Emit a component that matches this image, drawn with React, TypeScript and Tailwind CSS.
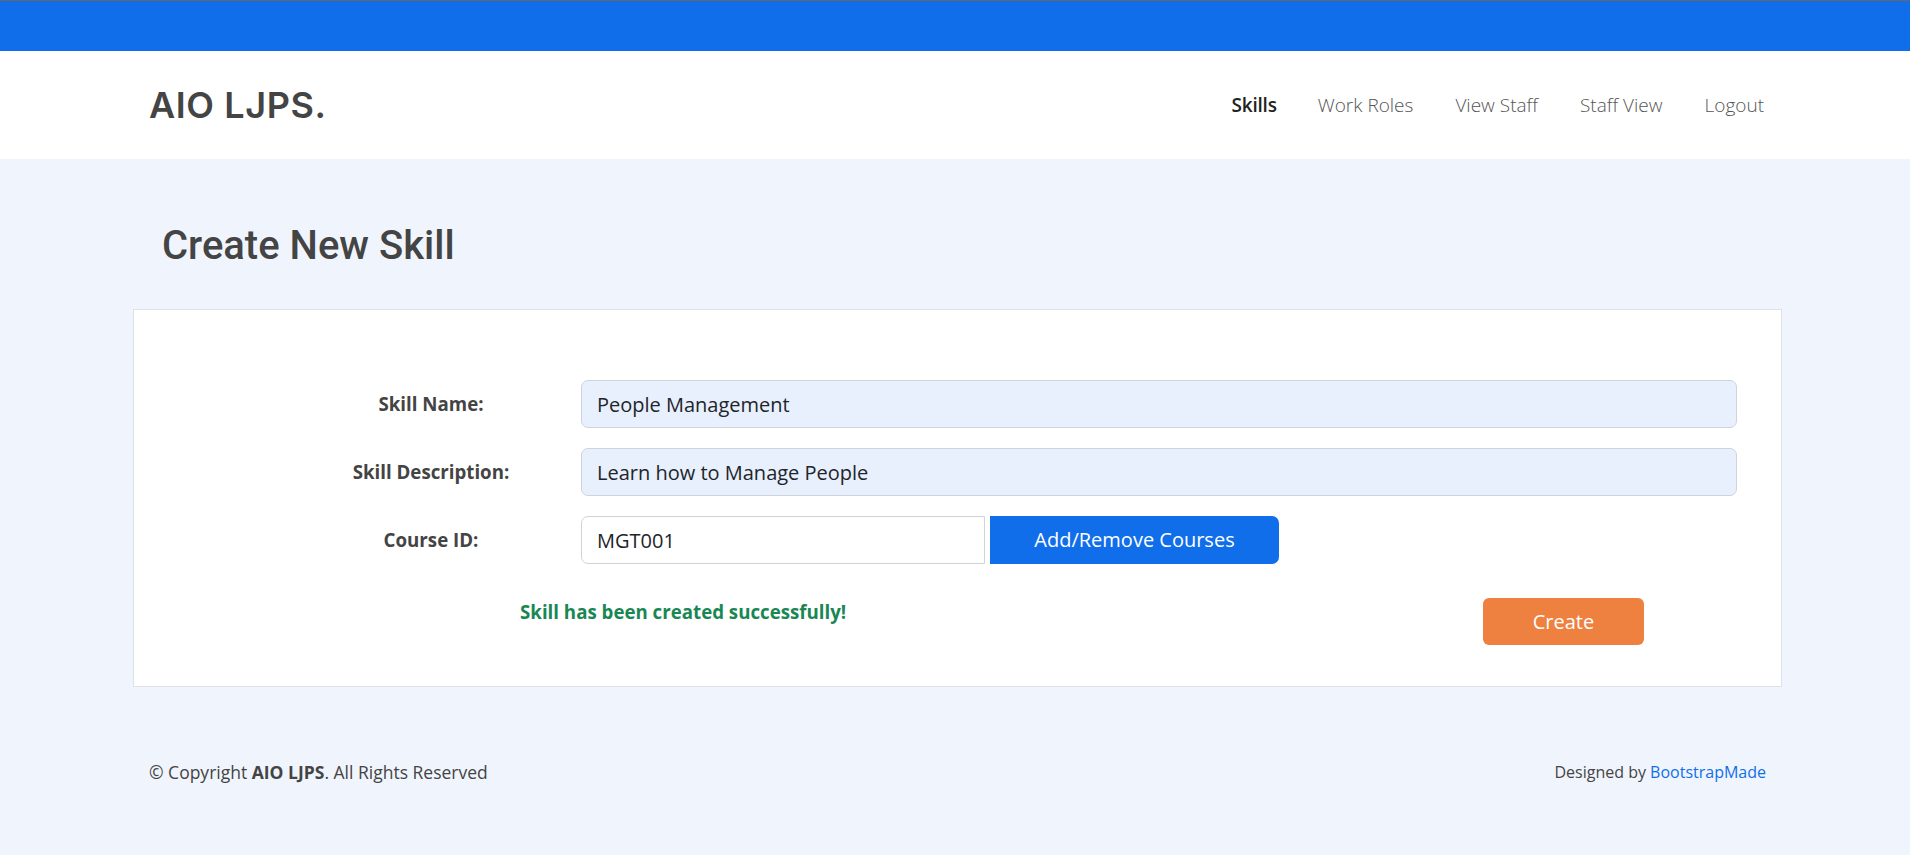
const navItems = ['Skills', 'Work Roles', 'View Staff', 'Staff View', 'Logout']

function Field({ label, children }: { label: string; children: React.ReactNode }) {
  return (
    <div className="flex items-center h-[48px]">
      <label className="w-[300px] shrink-0 text-center text-[18.7px] font-bold text-[#444]">{label}</label>
      <div className="flex-1 flex h-full">{children}</div>
    </div>
  )
}

export default function App() {
  return (
    <div className="min-h-[855px] bg-[#f0f5fd] font-['Open_Sans',sans-serif] text-[#444]">
      <div className="h-px bg-[#666]" />
      <div className="h-[50px] bg-[#106eea]" />

      <header className="h-[108px] bg-white flex items-center">
        <div className="ml-[133px] w-[1649px] pl-4 pr-[18px] flex items-center justify-between">
          <h1 className="font-['Inter',sans-serif] text-[36px] font-semibold tracking-[0.6px] text-[#444] leading-none">
            AIO LJPS.
          </h1>
          <nav className="flex items-center gap-[42px] text-[19px]">
            {navItems.map((item, i) => (
              <a
                key={item}
                href="#"
                className={i === 0 ? 'font-semibold text-[#222] tracking-[-0.2px] -mr-[1px]' : 'font-light text-[#555]'}
              >
                {item}
              </a>
            ))}
          </nav>
        </div>
      </header>

      <main className="ml-[133px] w-[1649px]">
        <h2 className="mt-[63px] pl-[29px] font-['Roboto',sans-serif] text-[40px] leading-[48px] font-medium text-[#444]">
          Create New Skill
        </h2>

        <div className="mt-[39px] bg-white border border-[#dee2e6] pt-[70px] pb-[41px] pl-[147px] pr-[44px]">
          <div className="flex flex-col gap-[20px]">
            <Field label="Skill Name:">
              <input
                readOnly
                value="People Management"
                className="w-full h-full rounded-[7px] border border-[#ced4da] bg-[#e8f0fe] px-[15px] text-[20px] text-[#212529] outline-none"
              />
            </Field>
            <Field label="Skill Description:">
              <input
                readOnly
                value="Learn how to Manage People"
                className="w-full h-full rounded-[7px] border border-[#ced4da] bg-[#e8f0fe] px-[15px] text-[20px] text-[#212529] outline-none"
              />
            </Field>
            <Field label="Course ID:">
              <input
                readOnly
                value="MGT001"
                className="w-[404px] h-full rounded-l-[7px] border border-[#ced4da] bg-white px-[15px] text-[20px] text-[#212529] outline-none"
              />
              <button className="ml-[5px] w-[289px] h-full rounded-r-[7px] bg-[#106eea] text-white text-[20px]">
                Add/Remove Courses
              </button>
            </Field>
          </div>

          <div className="mt-[34px] flex items-start">
            <p className="ml-[239px] text-[18.7px] leading-[27px] font-bold text-[#198754]">
              Skill has been created successfully!
            </p>
            <button className="ml-auto mr-[93px] w-[161px] h-[47px] rounded-[6px] bg-[#ef8140] text-white text-[20px]">
              Create
            </button>
          </div>
        </div>

        <footer className="mt-[73px] px-4 flex items-center justify-between">
          <p className="text-[17.5px] leading-[25px] text-[#444]">
            © Copyright <strong>AIO LJPS</strong>. All Rights Reserved
          </p>
          <p className="text-[16px] leading-[25px] text-[#444]">
            Designed by <a href="#" className="text-[#106eea]">BootstrapMade</a>
          </p>
        </footer>
      </main>
    </div>
  )
}
